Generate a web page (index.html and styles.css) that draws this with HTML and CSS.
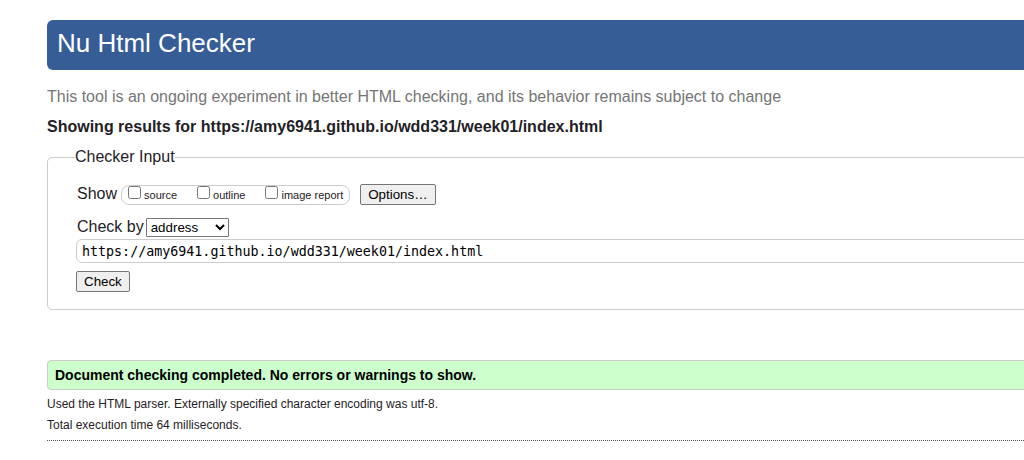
FILE: index.html
```html
<!DOCTYPE html>
<html lang="en">
<head>
<meta charset="utf-8">
<title>Nu Html Checker</title>
<link rel="stylesheet" href="styles.css">
</head>
<body>
<main class="page">
  <h1 class="banner">Nu Html Checker</h1>
  <p class="notice">This tool is an ongoing experiment in better HTML checking, and its behavior remains subject to change</p>
  <h2 class="results-title">Showing results for https://amy6941.github.io/wdd331/week01/index.html</h2>
  <form>
    <fieldset class="checker">
      <legend class="checker-legend">Checker Input</legend>
      <div class="show-row">
        <span class="show-label">Show</span>
        <div class="show-options">
          <label class="option"><input class="tick" type="checkbox" name="source">source</label>
          <label class="option"><input class="tick" type="checkbox" name="outline">outline</label>
          <label class="option"><input class="tick" type="checkbox" name="images">image report</label>
        </div>
        <button class="button options-button" type="button">Options…</button>
      </div>
      <div class="by-row">
        <label for="method">Check by</label>
        <select class="method" id="method"><option>address</option><option>file upload</option><option>text input</option></select>
      </div>
      <input class="address" type="text" aria-label="Address" value="https://amy6941.github.io/wdd331/week01/index.html" spellcheck="false">
      <button class="button" type="submit">Check</button>
    </fieldset>
  </form>
  <p class="success">Document checking completed. No errors or warnings to show.</p>
  <div class="details">
    <p class="detail">Used the HTML parser. Externally specified character encoding was utf-8.</p>
    <p class="detail">Total execution time 64 milliseconds.</p>
  </div>
</main>
</body>
</html>
```
FILE: styles.css
```css
* { box-sizing: border-box; }
body {
  margin: 0;
  overflow-x: hidden;
  background: #fff;
  color: #1f2126;
  font: 16px/20px "Liberation Sans", Arial, sans-serif;
}
.page { margin: 20px -48px 0 47px; }
.banner {
  margin: 0;
  padding: 8px 10px 12px;
  border-radius: 6px;
  background: #365d95;
  color: #fff;
  font-size: 26px;
  font-weight: normal;
  line-height: 30px;
}
.notice { margin: 17px 0 10px; color: #757575; }
.results-title { margin: 0 0 10px; font-size: 16px; }
.checker {
  margin: 0;
  padding: 17px 28px;
  border: 1px solid #ccc;
  border-radius: 5px;
  min-width: 0;
}
.checker-legend { margin-left: -1px; padding: 0; }
.show-row { display: flex; align-items: flex-end; gap: 4px; padding-left: 1px; }
.show-label { align-self: flex-start; }
.show-options {
  display: flex;
  gap: 20px;
  height: 20px;
  padding: 0 6px;
  border: 1px solid #ccc;
  border-radius: 8px;
  font-size: 11px;
  line-height: 18px;
}
.option { display: flex; gap: 3px; }
.tick { width: 13px; height: 13px; margin: 0; }
.button {
  height: 21px;
  padding: 0 7px;
  border: 1px solid #767676;
  border-radius: 2px;
  background: #efefef;
  color: #000;
  font-family: "Liberation Sans", Arial, sans-serif;
}
.options-button { margin-left: 6px; }
.by-row { display: flex; align-items: center; gap: 2px; margin-top: 12px; padding-left: 1px; }
.method {
  width: 83px;
  height: 19px;
  border: 1px solid #767676;
  border-radius: 1px;
  background: #fff;
  color: #000;
  font-family: "Liberation Sans", Arial, sans-serif;
}
.address {
  display: block;
  width: 100%;
  height: 24px;
  margin: 2px 0 8px;
  padding: 0 5px;
  border: 1px solid #ccc;
  border-radius: 6px;
  color: #000;
  font-family: "DejaVu Sans Mono", monospace;
}
.success {
  margin: 50px 0 4px;
  padding: 4px 7px;
  border: 1px solid #ccc;
  border-radius: 4px;
  background: #cfc;
  color: #000;
  font-size: 14px;
  font-weight: bold;
}
.details { padding-bottom: 4px; border-bottom: 1px dotted #555; font-size: 12px; }
.detail { margin: 0 0 1px; }
```
